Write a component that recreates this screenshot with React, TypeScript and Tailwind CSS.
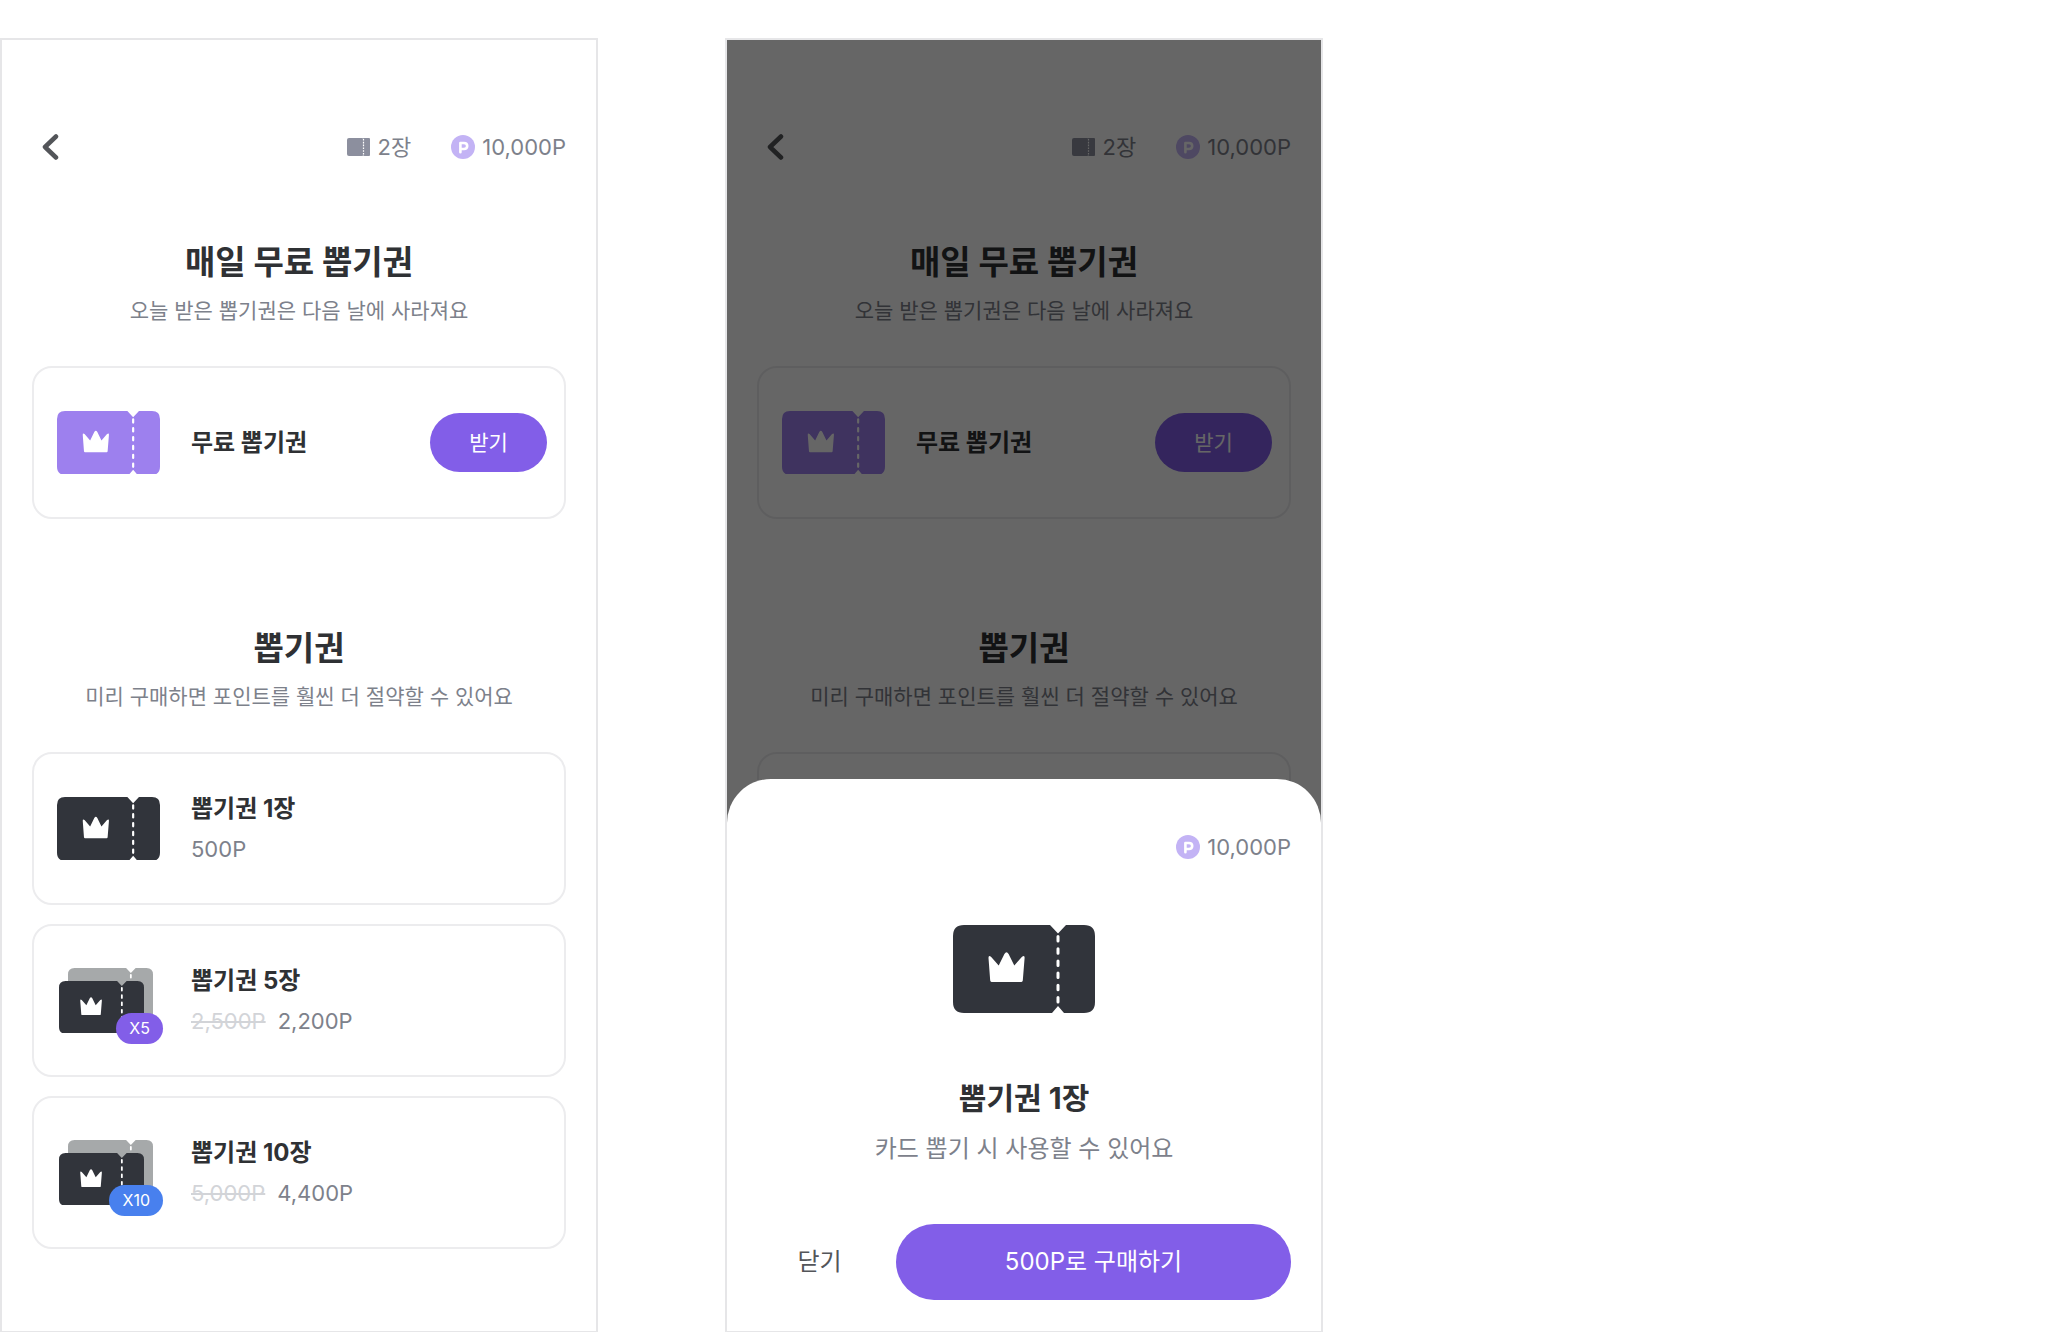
import type { ReactNode } from "react"
import clsx from "clsx"

const CROWN =
  "M35.5 33 Q35.4 29.6 38 31.8 L45.7 40.5 L51.4 29 Q53.5 25.4 55.6 29 L61.3 40.5 L69 31.8 Q71.8 29.6 71.6 33 L69.8 55.6 Q69.6 57 68.4 57 H38.6 Q37.4 57 37.2 55.6 Z"

function Ticket({ className, blank = false }: { className?: string; blank?: boolean }) {
  return (
    <svg viewBox="0 0 142 88" className={clsx("block", className)} aria-hidden="true">
      <path
        fill="currentColor"
        d="M11 0 H97 L105 8.5 L113 0 H131 Q142 0 142 11 V77 Q142 88 131 88 H111 L105 81 L99 88 H11 Q0 88 0 77 V11 Q0 0 11 0 Z"
      />
      <path d="M105 11.5 V78" stroke="#fff" strokeWidth="3" strokeLinecap="round" strokeDasharray="4.5 7.7" />
      {!blank && <path d={CROWN} fill="#fff" />}
    </svg>
  )
}

function TicketStack({ count, badgeClass }: { count: number; badgeClass: string }) {
  return (
    <div className="relative h-[86px] w-[106px]">
      <Ticket blank className="absolute top-[10px] left-[11px] w-[85px] text-[#a6a9aa]" />
      <Ticket className="absolute top-[23px] left-0.5 w-[85px] text-[#31343b]" />
      <span
        className={clsx(
          "absolute right-0 bottom-0 flex h-[31px] items-center rounded-full px-[13px] text-base text-white",
          badgeClass,
        )}
      >
        X{count}
      </span>
    </div>
  )
}

function Points() {
  return (
    <span className="flex items-center gap-[7px]">
      <svg viewBox="0 0 24 24" className="size-6" aria-hidden="true">
        <circle cx="12" cy="12" r="12" fill="#c3b3f5" />
        <path
          d="M9.4 17.2 V8 H13 Q16.2 8 16.2 11 Q16.2 14 13 14 H9.4"
          fill="none"
          stroke="#fff"
          strokeWidth="2.6"
          strokeLinejoin="round"
          strokeLinecap="round"
        />
      </svg>
      10,000P
    </span>
  )
}

function SectionTitle({ title, children }: { title: string; children: ReactNode }) {
  return (
    <div className="text-center">
      <h2 className="text-[33px] leading-[48px] font-bold text-[#2f3134]">{title}</h2>
      <p className="mt-[9px] text-[21px] leading-8 text-[#7d818b]">{children}</p>
    </div>
  )
}

const PRODUCTS = [
  { name: "뽑기권 1장", price: "500P", count: 1, badgeClass: "" },
  { name: "뽑기권 5장", price: "2,200P", before: "2,500P", count: 5, badgeClass: "bg-[#825ee8]" },
  { name: "뽑기권 10장", price: "4,400P", before: "5,000P", count: 10, badgeClass: "bg-[#4880ee]" },
]

function Shop() {
  return (
    <div className="px-[30px] pt-[87px] pb-[82px]">
      <header className="flex h-10 items-center justify-between text-[22px] text-[#7d818b]">
        <button type="button" aria-label="뒤로" className="pl-[9px]">
          <svg viewBox="0 0 18 28" className="h-7 w-[18px]" fill="none" aria-hidden="true">
            <path d="M15 3.5 L4 14 L15 24.5" stroke="#535559" strokeWidth="4.5" strokeLinecap="round" strokeLinejoin="round" />
          </svg>
        </button>
        <div className="flex items-center gap-10">
          <span className="flex items-center gap-2">
            <svg viewBox="0 0 23 18" className="h-[18px] w-[23px]" aria-hidden="true">
              <rect width="17" height="18" rx="2" fill="#8c8f9e" />
              <rect x="16" width="7" height="18" rx="1" fill="#8c8f9e" />
              <path d="M16.5 1 V18" stroke="#fff" strokeWidth="1.2" strokeDasharray="1.6 1.2" />
            </svg>
            2장
          </span>
          <Points />
        </div>
      </header>

      <section className="mt-[71px]">
        <SectionTitle title="매일 무료 뽑기권">오늘 받은 뽑기권은 다음 날에 사라져요</SectionTitle>
        <div className="mt-[39px] flex h-[153px] items-center rounded-[20px] border-2 border-[#ececee] pr-[17px] pl-[23px]">
          <Ticket className="w-[103px] text-[#9d80ee]" />
          <h3 className="ml-[31px] flex-1 text-2xl font-bold text-[#2f3134]">무료 뽑기권</h3>
          <button type="button" className="h-[59px] w-[117px] rounded-full bg-[#825ee8] text-[21px] text-white">
            받기
          </button>
        </div>
      </section>

      <section className="mt-[105px]">
        <SectionTitle title="뽑기권">미리 구매하면 포인트를 훨씬 더 절약할 수 있어요</SectionTitle>
        <ul className="mt-[39px] flex flex-col gap-[19px]">
          {PRODUCTS.map((product) => (
            <li key={product.name}>
              <button
                type="button"
                className="flex h-[153px] w-full items-center gap-7 rounded-[20px] border-2 border-[#ececee] pl-[23px] text-left"
              >
                {product.count > 1 ? (
                  <TicketStack count={product.count} badgeClass={product.badgeClass} />
                ) : (
                  <div className="w-[106px]">
                    <Ticket className="w-[103px] text-[#31343b]" />
                  </div>
                )}
                <span className="flex flex-col gap-2">
                  <strong className="text-2xl leading-8 font-bold text-[#2f3134]">{product.name}</strong>
                  <span className="flex gap-3 text-[22px] leading-8 text-[#7d818b]">
                    {product.before && <s className="text-[#d2d4d8]">{product.before}</s>}
                    <span>{product.price}</span>
                  </span>
                </span>
              </button>
            </li>
          ))}
        </ul>
      </section>
    </div>
  )
}

function PurchaseSheet() {
  return (
    <div
      role="dialog"
      aria-label="뽑기권 1장 구매"
      className="absolute inset-x-0 bottom-0 rounded-t-[44px] bg-white px-[30px] pt-[52px] pb-[31px]"
    >
      <div className="flex h-8 justify-end text-[22px] text-[#7d818b]">
        <Points />
      </div>
      <Ticket className="mx-auto mt-[62px] w-[142px] text-[#31343b]" />
      <div className="mt-[61px] text-center">
        <h2 className="text-[30px] leading-[48px] font-bold text-[#2f3134]">뽑기권 1장</h2>
        <p className="mt-[9px] text-2xl leading-9 text-[#7d818b]">카드 뽑기 시 사용할 수 있어요</p>
      </div>
      <div className="mt-[57px] flex text-2xl">
        <button type="button" className="w-[139px] pr-[14px] text-[#535559]">
          닫기
        </button>
        <button type="button" className="h-[76px] flex-1 rounded-full bg-[#825ee8] text-white">
          500P로 구매하기
        </button>
      </div>
    </div>
  )
}

function Phone({ children }: { children: ReactNode }) {
  return (
    <main className="relative w-[29.2%] min-w-[520px] border-2 border-[#e6e6e8]">
      {children}
    </main>
  )
}

export default function App() {
  return (
    <div className="flex gap-[127px] bg-white pt-[38px] font-['Inter','Noto_Sans_CJK_KR',sans-serif]">
      <Phone>
        <Shop />
      </Phone>
      <Phone>
        <Shop />
        <div className="absolute inset-0 bg-black/60" />
        <PurchaseSheet />
      </Phone>
    </div>
  )
}
